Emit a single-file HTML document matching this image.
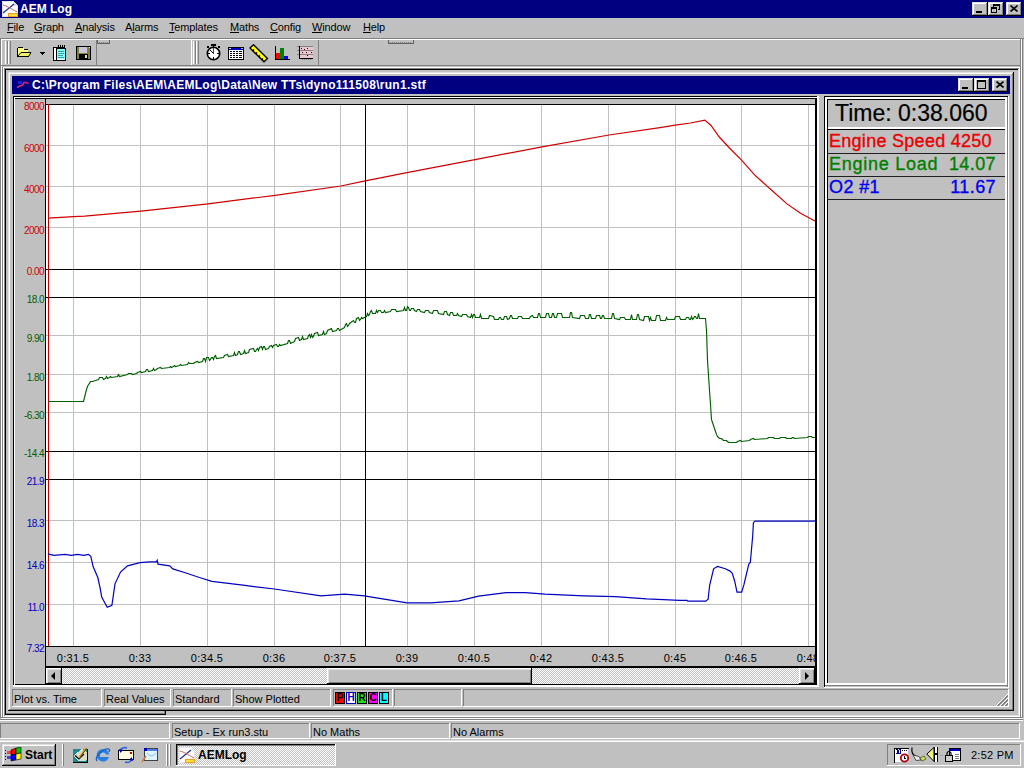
<!DOCTYPE html><html><head><meta charset="utf-8"><title>AEM Log</title><style>
html,body{margin:0;padding:0;width:1024px;height:768px;overflow:hidden;background:#c0c0c0;position:relative;font-family:"Liberation Sans",sans-serif;}
body>div{position:absolute}
.u{text-decoration:underline;text-underline-offset:1px}
.mn{font-size:11px;line-height:13px;color:#000;letter-spacing:-0.15px}
.st{font-size:11px;line-height:14px;color:#000;letter-spacing:0px}
</style></head><body>
<div style="left:0px;top:0px;width:1024px;height:18px;background:#000080"></div>
<svg style="position:absolute;left:2px;top:1px" width="16" height="16" viewBox="0 0 16 16" shape-rendering="crispEdges"><path d="M0.5 0.5H11.5L15.5 4.5V15.5H0.5Z" fill="#fff" stroke="#e8e0f8"/><path d="M11 0V5H16" fill="#d8e8d8"/><path d="M1 12L12 3" stroke="#303090" stroke-width="1.3" shape-rendering="auto" fill="none"/><path d="M1 4C5 5 8 7 15 11" stroke="#c06060" stroke-width="1" shape-rendering="auto" fill="none"/><rect x="6" y="12" width="10" height="4" fill="#f0a020"/><rect x="7" y="13" width="8" height="2" fill="#ffe040"/></svg>
<div style="left:20px;top:2px;white-space:pre;color:#fff;font-weight:bold;font-size:12px;line-height:14px">AEM Log</div>
<div style="left:972px;top:2px;width:16px;height:14px;background:#c0c0c0"></div>
<div style="left:972px;top:2px;width:16px;height:1px;background:#dfdfdf"></div>
<div style="left:972px;top:2px;width:1px;height:14px;background:#dfdfdf"></div>
<div style="left:972px;top:15px;width:16px;height:1px;background:#000"></div>
<div style="left:987px;top:2px;width:1px;height:14px;background:#000"></div>
<div style="left:973px;top:3px;width:14px;height:1px;background:#fff"></div>
<div style="left:973px;top:3px;width:1px;height:12px;background:#fff"></div>
<div style="left:973px;top:14px;width:14px;height:1px;background:#808080"></div>
<div style="left:986px;top:3px;width:1px;height:12px;background:#808080"></div>
<div style="left:976px;top:11px;width:6px;height:2px;background:#000"></div>
<div style="left:988px;top:2px;width:16px;height:14px;background:#c0c0c0"></div>
<div style="left:988px;top:2px;width:16px;height:1px;background:#dfdfdf"></div>
<div style="left:988px;top:2px;width:1px;height:14px;background:#dfdfdf"></div>
<div style="left:988px;top:15px;width:16px;height:1px;background:#000"></div>
<div style="left:1003px;top:2px;width:1px;height:14px;background:#000"></div>
<div style="left:989px;top:3px;width:14px;height:1px;background:#fff"></div>
<div style="left:989px;top:3px;width:1px;height:12px;background:#fff"></div>
<div style="left:989px;top:14px;width:14px;height:1px;background:#808080"></div>
<div style="left:1002px;top:3px;width:1px;height:12px;background:#808080"></div>
<svg style="position:absolute;left:991px;top:4px" width="9" height="9" viewBox="0 0 9 9" shape-rendering="crispEdges"><path d="M2.5 2.5V0.5H8.5V5.5H6.5" fill="none" stroke="#000"/><rect x="2" y="1" width="7" height="1" fill="#000"/><rect x="0.5" y="3.5" width="5" height="5" fill="none" stroke="#000"/><rect x="0" y="4" width="6" height="1" fill="#000"/></svg>
<div style="left:1006px;top:2px;width:16px;height:14px;background:#c0c0c0"></div>
<div style="left:1006px;top:2px;width:16px;height:1px;background:#dfdfdf"></div>
<div style="left:1006px;top:2px;width:1px;height:14px;background:#dfdfdf"></div>
<div style="left:1006px;top:15px;width:16px;height:1px;background:#000"></div>
<div style="left:1021px;top:2px;width:1px;height:14px;background:#000"></div>
<div style="left:1007px;top:3px;width:14px;height:1px;background:#fff"></div>
<div style="left:1007px;top:3px;width:1px;height:12px;background:#fff"></div>
<div style="left:1007px;top:14px;width:14px;height:1px;background:#808080"></div>
<div style="left:1020px;top:3px;width:1px;height:12px;background:#808080"></div>
<svg style="position:absolute;left:1010px;top:5px" width="8" height="7" viewBox="0 0 8 7" shape-rendering="crispEdges"><path d="M0.5 0.5L7.5 6.5M7.5 0.5L0.5 6.5" stroke="#000" stroke-width="1.6" shape-rendering="auto"/></svg>
<div class="mn" style="left:7px;top:21px;white-space:pre"><span class="u">F</span>ile</div>
<div class="mn" style="left:34px;top:21px;white-space:pre"><span class="u">G</span>raph</div>
<div class="mn" style="left:75px;top:21px;white-space:pre"><span class="u">A</span>nalysis</div>
<div class="mn" style="left:125px;top:21px;white-space:pre">A<span class="u">l</span>arms</div>
<div class="mn" style="left:169px;top:21px;white-space:pre"><span class="u">T</span>emplates</div>
<div class="mn" style="left:230px;top:21px;white-space:pre"><span class="u">M</span>aths</div>
<div class="mn" style="left:270px;top:21px;white-space:pre"><span class="u">C</span>onfig</div>
<div class="mn" style="left:312px;top:21px;white-space:pre"><span class="u">W</span>indow</div>
<div class="mn" style="left:363px;top:21px;white-space:pre"><span class="u">H</span>elp</div>
<div style="left:0px;top:38px;width:1024px;height:1px;background:#808080"></div>
<div style="left:0px;top:38px;width:1px;height:679px;background:#808080"></div>
<div style="left:1px;top:39px;width:1021px;height:1px;background:#fff"></div>
<div style="left:1px;top:39px;width:1px;height:678px;background:#fff"></div>
<div style="left:1px;top:65px;width:1021px;height:1px;background:#808080"></div>
<div style="left:96px;top:40px;width:1px;height:26px;background:#808080"></div>
<div style="left:5px;top:41px;width:1px;height:23px;background:#fff"></div>
<div style="left:7px;top:41px;width:1px;height:23px;background:#808080"></div>
<div style="left:8px;top:41px;width:1px;height:23px;background:#fff"></div>
<div style="left:10px;top:41px;width:1px;height:23px;background:#808080"></div>
<div style="left:97px;top:43px;width:13px;height:1px;background:#606060"></div>
<div style="left:97px;top:40px;width:1px;height:4px;background:#606060"></div>
<div style="left:109px;top:40px;width:1px;height:4px;background:#606060"></div>
<div style="left:99px;top:42px;width:1px;height:1px;background:#808080"></div>
<div style="left:101px;top:42px;width:1px;height:1px;background:#808080"></div>
<div style="left:103px;top:42px;width:1px;height:1px;background:#808080"></div>
<div style="left:105px;top:42px;width:1px;height:1px;background:#808080"></div>
<div style="left:107px;top:42px;width:1px;height:1px;background:#808080"></div>
<div style="left:388px;top:43px;width:26px;height:1px;background:#606060"></div>
<div style="left:388px;top:40px;width:1px;height:4px;background:#606060"></div>
<div style="left:413px;top:40px;width:1px;height:4px;background:#606060"></div>
<div style="left:390px;top:42px;width:1px;height:1px;background:#808080"></div>
<div style="left:392px;top:42px;width:1px;height:1px;background:#808080"></div>
<div style="left:394px;top:42px;width:1px;height:1px;background:#808080"></div>
<div style="left:396px;top:42px;width:1px;height:1px;background:#808080"></div>
<div style="left:398px;top:42px;width:1px;height:1px;background:#808080"></div>
<div style="left:400px;top:42px;width:1px;height:1px;background:#808080"></div>
<div style="left:402px;top:42px;width:1px;height:1px;background:#808080"></div>
<div style="left:404px;top:42px;width:1px;height:1px;background:#808080"></div>
<div style="left:406px;top:42px;width:1px;height:1px;background:#808080"></div>
<div style="left:408px;top:42px;width:1px;height:1px;background:#808080"></div>
<div style="left:410px;top:42px;width:1px;height:1px;background:#808080"></div>
<div style="left:191px;top:40px;width:1px;height:25px;background:#fff"></div>
<div style="left:318px;top:40px;width:1px;height:26px;background:#808080"></div>
<div style="left:193px;top:41px;width:1px;height:23px;background:#fff"></div>
<div style="left:195px;top:41px;width:1px;height:23px;background:#808080"></div>
<div style="left:196px;top:41px;width:1px;height:23px;background:#fff"></div>
<div style="left:198px;top:41px;width:1px;height:23px;background:#808080"></div>
<svg style="position:absolute;left:16px;top:46px" width="16" height="12" viewBox="0 0 16 12" shape-rendering="crispEdges"><path d="M1.5 10.5V2.5L2.5 1.5H6.5L7.5 2.5V3.5H11.5V6.5" fill="#ffff80" stroke="#000"/><path d="M1.5 10.5V2.5L2.5 1.5H6.5L7.5 2.5V3.5H11.5V6.5H5L1.5 10.5Z" fill="#ffff80"/><path d="M1.5 10.5L5 6.5H15L12.5 10.5Z" fill="#f0f070" stroke="#000" stroke-linejoin="miter" shape-rendering="auto"/><path d="M1.5 2.5V10.5H12.5" fill="none" stroke="#000"/></svg>
<svg style="position:absolute;left:40px;top:52px" width="5" height="3" viewBox="0 0 5 3" shape-rendering="crispEdges"><path d="M0 0H5V1H4V2H3V3H2V2H1V1H0Z" fill="#000"/></svg>
<svg style="position:absolute;left:53px;top:45px" width="14" height="16" viewBox="0 0 14 16" shape-rendering="crispEdges"><rect x="0.5" y="2.5" width="11" height="13" fill="#fff" stroke="#000"/><rect x="3.5" y="3.5" width="9" height="12" fill="#80ffff" stroke="#000"/><rect x="4" y="14" width="8" height="1" fill="#fff"/><path d="M5 0V4M7 0V4M9 0V4M11 0V4" stroke="#000"/><path d="M5 6H11M5 8H11M5 10H10M5 12H11" stroke="#40a0a0"/></svg>
<svg style="position:absolute;left:76px;top:46px" width="15" height="14" viewBox="0 0 15 14" shape-rendering="crispEdges"><rect x="0.5" y="0.5" width="14" height="13" fill="#808040" stroke="#000"/><rect x="3" y="1" width="8" height="6" fill="#c8c8d8"/><rect x="3" y="8" width="9" height="6" fill="#000"/><rect x="9" y="9" width="2" height="3" fill="#e0e0c0"/><rect x="13" y="1" width="1" height="1" fill="#fff"/></svg>
<svg style="position:absolute;left:205px;top:44px" width="17" height="17" viewBox="0 0 17 17" shape-rendering="crispEdges"><circle cx="8.5" cy="9.5" r="6.2" fill="#fff" stroke="#000" stroke-width="1.6" shape-rendering="auto"/><rect x="6" y="0" width="5" height="2" fill="#000"/><rect x="8" y="1" width="1" height="2" fill="#000"/><rect x="2" y="2" width="2" height="2" fill="#000"/><rect x="13" y="2" width="2" height="2" fill="#000"/><rect x="8" y="4" width="1" height="6" fill="#c00040"/><path d="M5 6L8 9" stroke="#000" shape-rendering="auto"/><rect x="8" y="13" width="1" height="2" fill="#000"/><rect x="3" y="9" width="2" height="1" fill="#000"/><rect x="12" y="9" width="2" height="1" fill="#000"/></svg>
<svg style="position:absolute;left:228px;top:47px" width="16" height="13" viewBox="0 0 16 13" shape-rendering="crispEdges"><rect x="0.5" y="0.5" width="15" height="12" fill="#fff" stroke="#000"/><rect x="1" y="1" width="14" height="2" fill="#0000c0"/><rect x="1" y="1" width="2" height="1" fill="#c0c0ff"/><rect x="13" y="1" width="2" height="1" fill="#c0c0ff"/><path d="M2 5h2M5 5h2M8 5h2M11 5h3M2 7h2M5 7h2M8 7h2M11 7h3M2 9h2M5 9h2M8 9h2M11 9h3M2 11h2M5 11h2M8 11h2M11 11h3" stroke="#000" transform="translate(0,-0.5)"/></svg>
<svg style="position:absolute;left:249px;top:44px" width="20" height="19" viewBox="0 0 20 19" shape-rendering="crispEdges"><path d="M1 4L4.5 0.8L18.5 14.5L15 17.8Z" fill="#ffff00" stroke="#000" stroke-width="1.4" shape-rendering="auto"/><path d="M3.5 7L5 5.5M6.5 10L8 8.5M9.5 13L11 11.5M12.5 16L14 14.5" stroke="#000" stroke-width="1.4" shape-rendering="auto"/></svg>
<svg style="position:absolute;left:275px;top:46px" width="16" height="15" viewBox="0 0 16 15" shape-rendering="crispEdges"><rect x="1" y="7" width="4" height="6" fill="#ff0000"/><rect x="5" y="2" width="4" height="11" fill="#008000"/><rect x="9" y="10" width="4" height="3" fill="#0000ff"/><rect x="0" y="0" width="1" height="14" fill="#000"/><rect x="0" y="13" width="15" height="1" fill="#000"/></svg>
<svg style="position:absolute;left:296px;top:45px" width="18" height="17" viewBox="0 0 18 17" shape-rendering="crispEdges"><rect x="4" y="2" width="13" height="11" fill="#e8c8d0"/><rect x="1" y="1" width="16" height="1" fill="#808080"/><rect x="1" y="5" width="16" height="1" fill="#808080"/><rect x="1" y="9" width="16" height="1" fill="#808080"/><rect x="3" y="1" width="1" height="13" fill="#000"/><rect x="3" y="13" width="14" height="1" fill="#000"/><rect x="5" y="3" width="1" height="1" fill="#400"/><rect x="8" y="4" width="1" height="1" fill="#400"/><rect x="11" y="3" width="1" height="1" fill="#400"/><rect x="6" y="7" width="1" height="1" fill="#400"/><rect x="10" y="7" width="1" height="1" fill="#400"/><rect x="15" y="7" width="1" height="1" fill="#400"/><rect x="11" y="10" width="1" height="1" fill="#400"/><path d="M6 14v1M8 14v1M10 14v1M12 14v1M14 14v1" stroke="#808080" transform="translate(0.5,0)"/></svg>
<div style="left:1px;top:67px;width:1021px;height:1px;background:#fff"></div>
<div style="left:2px;top:67px;width:1px;height:650px;background:#808080"></div>
<div style="left:3px;top:67px;width:1px;height:650px;background:#fff"></div>
<div style="left:4px;top:68px;width:1016px;height:1px;background:#808080"></div>
<div style="left:4px;top:68px;width:1px;height:649px;background:#808080"></div>
<div style="left:5px;top:69px;width:1014px;height:1px;background:#000"></div>
<div style="left:5px;top:69px;width:1px;height:647px;background:#000"></div>
<div style="left:1019px;top:68px;width:1px;height:649px;background:#fff"></div>
<div style="left:1018px;top:69px;width:1px;height:647px;background:#dfdfdf"></div>
<div style="left:1020px;top:39px;width:1px;height:681px;background:#808080"></div>
<div style="left:1021px;top:39px;width:1px;height:681px;background:#fff"></div>
<div style="left:1022px;top:39px;width:1px;height:681px;background:#808080"></div>
<div style="left:4px;top:716px;width:1016px;height:1px;background:#fff"></div>
<div style="left:5px;top:715px;width:1014px;height:1px;background:#dfdfdf"></div>
<div style="left:0px;top:717px;width:1023px;height:1px;background:#808080"></div>
<div style="left:1px;top:718px;width:1022px;height:1px;background:#fff"></div>
<div style="left:0px;top:719px;width:1023px;height:1px;background:#808080"></div>
<div style="left:0px;top:720px;width:1023px;height:1px;background:#fff"></div>
<div style="left:6px;top:714px;width:160px;height:1px;background:#000"></div>
<div style="left:165px;top:710px;width:1px;height:5px;background:#000"></div>
<div style="left:6px;top:713px;width:159px;height:1px;background:#808080"></div>
<div style="left:164px;top:711px;width:1px;height:3px;background:#808080"></div>
<div style="left:8px;top:72px;width:1006px;height:639px;background:#c0c0c0"></div>
<div style="left:8px;top:72px;width:1006px;height:1px;background:#dfdfdf"></div>
<div style="left:8px;top:72px;width:1px;height:639px;background:#dfdfdf"></div>
<div style="left:9px;top:73px;width:1004px;height:1px;background:#fff"></div>
<div style="left:9px;top:73px;width:1px;height:637px;background:#fff"></div>
<div style="left:8px;top:710px;width:1006px;height:1px;background:#000"></div>
<div style="left:1013px;top:72px;width:1px;height:639px;background:#000"></div>
<div style="left:9px;top:709px;width:1004px;height:1px;background:#808080"></div>
<div style="left:1012px;top:73px;width:1px;height:637px;background:#808080"></div>
<div style="left:12px;top:76px;width:998px;height:18px;background:#000080"></div>
<svg style="position:absolute;left:14px;top:77px" width="16" height="16" viewBox="0 0 16 16" shape-rendering="crispEdges"><rect x="4" y="4" width="4" height="3" fill="#2020e0"/><path d="M3 10.5L6 9L8.6 8L10 5.6L12 5.6L14.6 6.5" stroke="#d03070" stroke-width="1.5" fill="none" shape-rendering="auto"/></svg>
<div style="left:32px;top:78px;white-space:pre;color:#fff;font-weight:bold;font-size:12px;line-height:14px;letter-spacing:0.28px">C:\Program Files\AEM\AEMLog\Data\New TTs\dyno111508\run1.stf</div>
<div style="left:958px;top:78px;width:16px;height:14px;background:#c0c0c0"></div>
<div style="left:958px;top:78px;width:16px;height:1px;background:#dfdfdf"></div>
<div style="left:958px;top:78px;width:1px;height:14px;background:#dfdfdf"></div>
<div style="left:958px;top:91px;width:16px;height:1px;background:#000"></div>
<div style="left:973px;top:78px;width:1px;height:14px;background:#000"></div>
<div style="left:959px;top:79px;width:14px;height:1px;background:#fff"></div>
<div style="left:959px;top:79px;width:1px;height:12px;background:#fff"></div>
<div style="left:959px;top:90px;width:14px;height:1px;background:#808080"></div>
<div style="left:972px;top:79px;width:1px;height:12px;background:#808080"></div>
<div style="left:962px;top:87px;width:6px;height:2px;background:#000"></div>
<div style="left:974px;top:78px;width:16px;height:14px;background:#c0c0c0"></div>
<div style="left:974px;top:78px;width:16px;height:1px;background:#dfdfdf"></div>
<div style="left:974px;top:78px;width:1px;height:14px;background:#dfdfdf"></div>
<div style="left:974px;top:91px;width:16px;height:1px;background:#000"></div>
<div style="left:989px;top:78px;width:1px;height:14px;background:#000"></div>
<div style="left:975px;top:79px;width:14px;height:1px;background:#fff"></div>
<div style="left:975px;top:79px;width:1px;height:12px;background:#fff"></div>
<div style="left:975px;top:90px;width:14px;height:1px;background:#808080"></div>
<div style="left:988px;top:79px;width:1px;height:12px;background:#808080"></div>
<svg style="position:absolute;left:977px;top:80px" width="9" height="9" viewBox="0 0 9 9" shape-rendering="crispEdges"><rect x="0.5" y="0.5" width="8" height="8" fill="none" stroke="#000"/><rect x="0" y="1" width="9" height="1" fill="#000"/></svg>
<div style="left:992px;top:78px;width:16px;height:14px;background:#c0c0c0"></div>
<div style="left:992px;top:78px;width:16px;height:1px;background:#dfdfdf"></div>
<div style="left:992px;top:78px;width:1px;height:14px;background:#dfdfdf"></div>
<div style="left:992px;top:91px;width:16px;height:1px;background:#000"></div>
<div style="left:1007px;top:78px;width:1px;height:14px;background:#000"></div>
<div style="left:993px;top:79px;width:14px;height:1px;background:#fff"></div>
<div style="left:993px;top:79px;width:1px;height:12px;background:#fff"></div>
<div style="left:993px;top:90px;width:14px;height:1px;background:#808080"></div>
<div style="left:1006px;top:79px;width:1px;height:12px;background:#808080"></div>
<svg style="position:absolute;left:996px;top:81px" width="8" height="7" viewBox="0 0 8 7" shape-rendering="crispEdges"><path d="M0.5 0.5L7.5 6.5M7.5 0.5L0.5 6.5" stroke="#000" stroke-width="1.6" shape-rendering="auto"/></svg>
<div style="left:13px;top:96px;width:806px;height:591px;background:#c0c0c0"></div>
<div style="left:13px;top:96px;width:805px;height:1px;background:#000"></div>
<div style="left:13px;top:96px;width:1px;height:590px;background:#000"></div>
<div style="left:14px;top:97px;width:803px;height:1px;background:#fff"></div>
<div style="left:14px;top:97px;width:1px;height:588px;background:#fff"></div>
<div style="left:15px;top:98px;width:802px;height:1px;background:#000"></div>
<div style="left:815px;top:98px;width:1px;height:587px;background:#000"></div>
<div style="left:816px;top:98px;width:1px;height:587px;background:#000"></div>
<div style="left:15px;top:684px;width:802px;height:1px;background:#000"></div>
<div style="left:817px;top:96px;width:1px;height:591px;background:#fff"></div>
<div style="left:818px;top:96px;width:1px;height:591px;background:#fff"></div>
<div style="left:13px;top:685px;width:806px;height:1px;background:#fff"></div>
<div style="left:13px;top:686px;width:806px;height:1px;background:#fff"></div>
<div style="left:824px;top:96px;width:185px;height:592px;background:#c0c0c0"></div>
<div style="left:824px;top:96px;width:185px;height:1px;background:#000"></div>
<div style="left:824px;top:96px;width:1px;height:592px;background:#000"></div>
<div style="left:825px;top:97px;width:183px;height:1px;background:#fff"></div>
<div style="left:825px;top:97px;width:1px;height:590px;background:#fff"></div>
<div style="left:826px;top:98px;width:181px;height:1px;background:#fff"></div>
<div style="left:826px;top:98px;width:1px;height:588px;background:#fff"></div>
<div style="left:1007px;top:97px;width:1px;height:590px;background:#808080"></div>
<div style="left:825px;top:685px;width:183px;height:1px;background:#808080"></div>
<div style="left:1008px;top:96px;width:1px;height:592px;background:#fff"></div>
<div style="left:824px;top:687px;width:185px;height:1px;background:#fff"></div>
<div style="left:827px;top:99px;width:178px;height:1px;background:#000"></div>
<div style="left:827px;top:99px;width:1px;height:585px;background:#000"></div>
<div style="left:1005px;top:98px;width:1px;height:586px;background:#fff"></div>
<div style="left:1006px;top:98px;width:1px;height:586px;background:#fff"></div>
<div style="left:827px;top:684px;width:180px;height:1px;background:#fff"></div>
<div style="left:827px;top:683px;width:180px;height:1px;background:#fff"></div>
<div style="left:835px;top:100px;white-space:pre;font-size:23px;line-height:26px;color:#000;-webkit-text-stroke:0.2px #000">Time: 0:38.060</div>
<div style="left:828px;top:127px;width:177px;height:1px;background:#fff"></div>
<div style="left:828px;top:128px;width:177px;height:1px;background:#fff"></div>
<div style="left:828px;top:129px;width:177px;height:1px;background:#000"></div>
<div style="left:828px;top:153px;width:177px;height:1px;background:#202020"></div>
<div style="left:828px;top:176px;width:177px;height:1px;background:#202020"></div>
<div style="left:828px;top:199px;width:177px;height:1px;background:#202020"></div>
<div style="left:829px;top:131px;white-space:pre;font-size:18px;line-height:20px;letter-spacing:0.4px;color:#e80000;-webkit-text-stroke:0.35px #e80000;letter-spacing:0.28px">Engine Speed 4250</div>
<div style="left:829px;top:154px;white-space:pre;font-size:18px;line-height:20px;letter-spacing:0.4px;color:#008000;-webkit-text-stroke:0.35px #008000;letter-spacing:0.75px">Engine Load</div>
<div style="left:896px;top:154px;width:100px;text-align:right;font-size:18px;line-height:20px;letter-spacing:0.4px;color:#008000;-webkit-text-stroke:0.35px #008000">14.07</div>
<div style="left:829px;top:177px;white-space:pre;font-size:18px;line-height:20px;letter-spacing:0.4px;color:#0000f0;-webkit-text-stroke:0.35px #0000f0">O2 #1</div>
<div style="left:896px;top:177px;width:100px;text-align:right;font-size:18px;line-height:20px;letter-spacing:0.4px;color:#0000f0;-webkit-text-stroke:0.35px #0000f0">11.67</div>
<div style="left:46px;top:104px;width:769px;height:543px;background:#fff"></div>
<div style="left:45px;top:98px;width:1px;height:569px;background:#000"></div>
<svg style="position:absolute;left:0;top:0" width="1024" height="768" shape-rendering="crispEdges"><rect x="73" y="104" width="1" height="542" fill="#c0c0c0"/><rect x="140" y="104" width="1" height="542" fill="#c0c0c0"/><rect x="207" y="104" width="1" height="542" fill="#c0c0c0"/><rect x="274" y="104" width="1" height="542" fill="#c0c0c0"/><rect x="340" y="104" width="1" height="542" fill="#c0c0c0"/><rect x="407" y="104" width="1" height="542" fill="#c0c0c0"/><rect x="474" y="104" width="1" height="542" fill="#c0c0c0"/><rect x="541" y="104" width="1" height="542" fill="#c0c0c0"/><rect x="608" y="104" width="1" height="542" fill="#c0c0c0"/><rect x="675" y="104" width="1" height="542" fill="#c0c0c0"/><rect x="741" y="104" width="1" height="542" fill="#c0c0c0"/><rect x="808" y="104" width="1" height="542" fill="#c0c0c0"/><rect x="46" y="145" width="769" height="1" fill="#c0c0c0"/><rect x="46" y="186" width="769" height="1" fill="#c0c0c0"/><rect x="46" y="227" width="769" height="1" fill="#c0c0c0"/><rect x="46" y="335" width="769" height="1" fill="#c0c0c0"/><rect x="46" y="374" width="769" height="1" fill="#c0c0c0"/><rect x="46" y="412" width="769" height="1" fill="#c0c0c0"/><rect x="46" y="520" width="769" height="1" fill="#c0c0c0"/><rect x="46" y="562" width="769" height="1" fill="#c0c0c0"/><rect x="46" y="604" width="769" height="1" fill="#c0c0c0"/><rect x="45" y="104" width="770" height="1" fill="#000"/><rect x="45" y="269" width="770" height="1" fill="#000"/><rect x="45" y="297" width="770" height="1" fill="#000"/><rect x="45" y="451" width="770" height="1" fill="#000"/><rect x="45" y="479" width="770" height="1" fill="#000"/><rect x="45" y="646" width="770" height="1" fill="#000"/><rect x="365" y="104" width="1" height="542" fill="#000"/><rect x="48" y="104" width="1" height="542" fill="#c00000"/></svg>
<svg style="position:absolute;left:0;top:0" width="1024" height="768"><path d="M48.0 218.2 L73.7 216.6 L84.6 216.2 L140.9 211.2 L208.0 203.8 L275.2 195.3 L340.9 186.0 L364.0 181.2 L407.0 172.6 L475.0 159.7 L542.0 146.8 L609.0 135.0 L660.0 127.7 L675.2 125.2 L690.5 123.0 L704.9 120.1 L710.8 125.2 L719.3 137.0 L729.4 148.0 L741.3 159.9 L754.8 175.1 L770.0 188.7 L787.0 203.9 L800.5 213.2 L815.0 221.0" fill="none" stroke="#d00000" stroke-width="1.2"/><path d="M48.5 401.5 L49.5 401.5 L50.5 401.5 L51.5 401.5 L52.5 401.5 L53.5 401.5 L54.5 401.5 L55.5 401.5 L56.5 401.5 L57.5 401.5 L58.5 401.5 L59.5 401.5 L60.5 401.5 L61.5 401.5 L62.5 401.5 L63.5 401.5 L64.5 401.5 L65.5 401.5 L66.5 401.5 L67.5 401.5 L68.5 401.5 L69.5 401.5 L70.5 401.5 L71.5 401.5 L72.5 401.5 L73.5 401.5 L74.5 401.5 L75.5 401.5 L76.5 401.5 L77.5 401.5 L78.5 401.5 L79.5 401.5 L80.5 401.5 L81.5 401.5 L82.5 401.5 L83.5 401.5 L84.5 397.5 L85.5 393.5 L86.5 389.5 L87.5 386.5 L88.5 384.5 L89.5 383.5 L90.5 381.5 L91.5 381.5 L92.5 381.5 L98.5 379.5 L99.5 377.5 L102.5 377.5 L103.5 379.5 L105.5 378.5 L106.5 376.5 L107.5 378.5 L109.5 377.5 L110.5 376.5 L111.5 377.5 L117.5 376.5 L118.5 374.5 L119.5 376.5 L127.5 374.5 L128.5 373.5 L131.5 373.5 L132.5 374.5 L136.5 373.5 L137.5 372.5 L140.5 371.5 L141.5 372.5 L145.5 371.5 L146.5 369.5 L147.5 369.5 L148.5 371.5 L152.5 370.5 L153.5 368.5 L154.5 370.5 L156.5 369.5 L157.5 368.5 L160.5 367.5 L161.5 368.5 L169.5 367.5 L170.5 366.5 L171.5 367.5 L173.5 366.5 L174.5 365.5 L175.5 366.5 L179.5 365.5 L180.5 364.5 L181.5 365.5 L187.5 364.5 L188.5 362.5 L189.5 363.5 L193.5 363.5 L194.5 362.5 L197.5 361.5 L198.5 362.5 L202.5 361.5 L203.5 358.5 L204.5 358.5 L205.5 361.5 L206.5 357.5 L208.5 357.5 L209.5 360.5 L210.5 359.5 L211.5 357.5 L212.5 357.5 L213.5 359.5 L214.5 356.5 L215.5 355.5 L216.5 358.5 L223.5 357.5 L224.5 355.5 L227.5 354.5 L228.5 356.5 L233.5 355.5 L234.5 352.5 L235.5 355.5 L237.5 354.5 L238.5 351.5 L239.5 351.5 L240.5 354.5 L243.5 353.5 L244.5 350.5 L245.5 353.5 L248.5 352.5 L249.5 349.5 L253.5 348.5 L254.5 351.5 L255.5 351.5 L256.5 349.5 L257.5 348.5 L258.5 350.5 L259.5 347.5 L261.5 346.5 L262.5 349.5 L263.5 346.5 L264.5 346.5 L265.5 349.5 L268.5 348.5 L269.5 346.5 L271.5 345.5 L272.5 347.5 L273.5 345.5 L276.5 344.5 L277.5 346.5 L278.5 346.5 L279.5 344.5 L280.5 345.5 L287.5 343.5 L288.5 340.5 L289.5 340.5 L290.5 343.5 L294.5 341.5 L295.5 338.5 L298.5 337.5 L299.5 340.5 L301.5 339.5 L302.5 336.5 L303.5 339.5 L307.5 338.5 L308.5 335.5 L309.5 334.5 L310.5 337.5 L311.5 334.5 L312.5 337.5 L313.5 336.5 L314.5 333.5 L317.5 332.5 L318.5 335.5 L322.5 334.5 L323.5 331.5 L324.5 334.5 L326.5 333.5 L327.5 330.5 L331.5 328.5 L332.5 331.5 L336.5 330.5 L337.5 328.5 L338.5 328.5 L339.5 330.5 L344.5 327.5 L345.5 324.5 L346.5 323.5 L347.5 326.5 L348.5 325.5 L349.5 323.5 L353.5 320.5 L354.5 322.5 L355.5 322.5 L356.5 318.5 L358.5 317.5 L359.5 320.5 L360.5 319.5 L361.5 317.5 L362.5 318.5 L366.5 316.5 L367.5 313.5 L368.5 315.5 L369.5 314.5 L370.5 311.5 L371.5 310.5 L372.5 313.5 L375.5 313.5 L376.5 310.5 L377.5 312.5 L378.5 310.5 L380.5 310.5 L381.5 312.5 L383.5 312.5 L384.5 310.5 L385.5 312.5 L390.5 311.5 L391.5 309.5 L395.5 309.5 L396.5 311.5 L403.5 310.5 L404.5 307.5 L405.5 310.5 L406.5 310.5 L407.5 306.5 L408.5 307.5 L409.5 310.5 L410.5 310.5 L411.5 308.5 L413.5 308.5 L414.5 310.5 L416.5 311.5 L417.5 309.5 L419.5 309.5 L420.5 311.5 L424.5 312.5 L425.5 310.5 L428.5 310.5 L429.5 312.5 L432.5 313.5 L433.5 310.5 L437.5 310.5 L438.5 313.5 L443.5 314.5 L444.5 311.5 L446.5 311.5 L447.5 314.5 L449.5 315.5 L450.5 312.5 L452.5 312.5 L453.5 315.5 L456.5 315.5 L457.5 313.5 L458.5 315.5 L461.5 316.5 L462.5 314.5 L466.5 314.5 L467.5 316.5 L470.5 317.5 L471.5 314.5 L472.5 317.5 L473.5 314.5 L474.5 314.5 L475.5 317.5 L479.5 317.5 L480.5 314.5 L481.5 318.5 L488.5 318.5 L489.5 315.5 L493.5 316.5 L494.5 319.5 L498.5 319.5 L499.5 317.5 L500.5 317.5 L501.5 319.5 L503.5 319.5 L504.5 316.5 L506.5 316.5 L507.5 319.5 L509.5 318.5 L510.5 315.5 L511.5 315.5 L512.5 318.5 L517.5 318.5 L518.5 316.5 L521.5 316.5 L522.5 318.5 L529.5 318.5 L530.5 316.5 L532.5 315.5 L533.5 317.5 L537.5 317.5 L538.5 313.5 L539.5 313.5 L540.5 317.5 L545.5 317.5 L546.5 313.5 L548.5 313.5 L549.5 317.5 L551.5 317.5 L552.5 313.5 L553.5 313.5 L554.5 317.5 L556.5 317.5 L557.5 313.5 L561.5 313.5 L562.5 317.5 L569.5 317.5 L570.5 312.5 L571.5 312.5 L572.5 317.5 L579.5 318.5 L580.5 315.5 L584.5 315.5 L585.5 318.5 L588.5 318.5 L589.5 314.5 L590.5 314.5 L591.5 318.5 L595.5 318.5 L596.5 315.5 L599.5 315.5 L600.5 318.5 L601.5 318.5 L602.5 315.5 L603.5 315.5 L604.5 318.5 L611.5 318.5 L612.5 313.5 L613.5 313.5 L614.5 318.5 L619.5 319.5 L620.5 317.5 L624.5 317.5 L625.5 319.5 L630.5 319.5 L631.5 314.5 L632.5 319.5 L636.5 319.5 L637.5 314.5 L638.5 314.5 L639.5 319.5 L643.5 320.5 L644.5 316.5 L648.5 316.5 L649.5 320.5 L650.5 317.5 L651.5 320.5 L655.5 320.5 L656.5 315.5 L659.5 315.5 L660.5 320.5 L665.5 320.5 L666.5 317.5 L667.5 319.5 L674.5 319.5 L675.5 316.5 L679.5 316.5 L680.5 319.5 L685.5 319.5 L686.5 317.5 L688.5 317.5 L689.5 319.5 L690.5 319.5 L691.5 316.5 L692.5 319.5 L693.5 318.5 L694.5 316.5 L695.5 316.5 L696.5 318.5 L697.5 318.5 L698.5 313.5 L699.5 318.5 L703.5 318.5 L704.5 318.5 L705.5 318.5 L706.5 330.5 L707.5 360.5 L708.5 375.5 L709.5 390.5 L710.5 404.5 L711.5 419.5 L712.5 422.5 L713.5 425.5 L714.5 428.5 L715.5 431.5 L716.5 434.5 L717.5 436.5 L718.5 437.5 L719.5 438.5 L720.5 438.5 L721.5 438.5 L722.5 439.5 L723.5 440.5 L724.5 440.5 L725.5 440.5 L726.5 440.5 L727.5 441.5 L728.5 442.5 L736.5 442.5 L737.5 441.5 L740.5 440.5 L741.5 441.5 L749.5 440.5 L750.5 439.5 L753.5 438.5 L754.5 439.5 L767.5 438.5 L768.5 437.5 L773.5 437.5 L774.5 438.5 L779.5 438.5 L780.5 437.5 L785.5 437.5 L786.5 438.5 L791.5 438.5 L792.5 437.5 L793.5 437.5 L794.5 438.5 L807.5 437.5 L808.5 436.5 L811.5 436.5 L812.5 437.5 L814.5 437.5 L815.0 437.5" fill="none" stroke="#006000" stroke-width="1.15"/><path d="M47.8 553.8 L54.0 555.3 L65.0 554.4 L71.2 555.3 L77.5 554.4 L83.8 555.3 L88.4 554.4 L90.8 556.4 L93.1 566.6 L97.8 577.5 L100.2 588.4 L101.7 597.0 L107.2 607.2 L111.9 605.3 L115.0 583.8 L120.5 572.0 L127.5 565.8 L140.0 562.7 L149.4 561.9 L156.4 561.9 L157.2 560.3 L158.0 564.2 L169.7 565.8 L172.8 568.9 L185.3 572.8 L199.4 577.5 L211.9 581.3 L243.0 585.2 L274.4 589.0 L321.0 595.8 L344.7 594.2 L364.2 595.8 L407.2 602.8 L430.6 602.8 L459.0 600.9 L478.6 596.2 L506.0 592.7 L525.5 592.7 L545.0 594.2 L584.0 595.8 L615.3 596.6 L646.6 598.9 L680.0 600.3 L687.0 600.3 L687.8 601.2 L705.8 601.2 L708.1 599.2 L709.7 585.2 L713.6 568.8 L717.5 566.4 L725.3 568.8 L730.0 571.1 L732.3 573.4 L734.7 581.2 L737.0 592.2 L741.7 592.2 L744.0 584.4 L748.8 564.0 L750.3 562.5 L752.7 536.0 L753.4 522.7 L755.0 521.1 L815.0 521.1" fill="none" stroke="#0000c0" stroke-width="1.2"/></svg>
<div style="left:10px;top:100.6px;width:34px;text-align:right;font-size:10px;line-height:12px;letter-spacing:-0.55px;color:#d00000">8000</div>
<div style="left:10px;top:142.6px;width:34px;text-align:right;font-size:10px;line-height:12px;letter-spacing:-0.55px;color:#d00000">6000</div>
<div style="left:10px;top:183.6px;width:34px;text-align:right;font-size:10px;line-height:12px;letter-spacing:-0.55px;color:#d00000">4000</div>
<div style="left:10px;top:224.6px;width:34px;text-align:right;font-size:10px;line-height:12px;letter-spacing:-0.55px;color:#d00000">2000</div>
<div style="left:10px;top:265.6px;width:34px;text-align:right;font-size:10px;line-height:12px;letter-spacing:-0.55px;color:#d00000">0.00</div>
<div style="left:10px;top:293.6px;width:34px;text-align:right;font-size:10px;line-height:12px;letter-spacing:-0.55px;color:#006000">18.0</div>
<div style="left:10px;top:332.6px;width:34px;text-align:right;font-size:10px;line-height:12px;letter-spacing:-0.55px;color:#006000">9.90</div>
<div style="left:10px;top:371.6px;width:34px;text-align:right;font-size:10px;line-height:12px;letter-spacing:-0.55px;color:#006000">1.80</div>
<div style="left:10px;top:409.6px;width:34px;text-align:right;font-size:10px;line-height:12px;letter-spacing:-0.55px;color:#006000">-6.30</div>
<div style="left:10px;top:447.6px;width:34px;text-align:right;font-size:10px;line-height:12px;letter-spacing:-0.55px;color:#006000">-14.4</div>
<div style="left:10px;top:475.6px;width:34px;text-align:right;font-size:10px;line-height:12px;letter-spacing:-0.55px;color:#0000c0">21.9</div>
<div style="left:10px;top:517.6px;width:34px;text-align:right;font-size:10px;line-height:12px;letter-spacing:-0.55px;color:#0000c0">18.3</div>
<div style="left:10px;top:559.6px;width:34px;text-align:right;font-size:10px;line-height:12px;letter-spacing:-0.55px;color:#0000c0">14.6</div>
<div style="left:10px;top:601.6px;width:34px;text-align:right;font-size:10px;line-height:12px;letter-spacing:-0.55px;color:#0000c0">11.0</div>
<div style="left:10px;top:642.6px;width:34px;text-align:right;font-size:10px;line-height:12px;letter-spacing:-0.55px;color:#0000c0">7.32</div>
<div style="left:46px;top:647px;width:769px;height:19px;overflow:hidden"><div style="position:absolute;left:-3px;top:5px;width:60px;text-align:center;font-size:11px;line-height:13px;color:#000;letter-spacing:0.3px">0:31.5</div><div style="position:absolute;left:64px;top:5px;width:60px;text-align:center;font-size:11px;line-height:13px;color:#000;letter-spacing:0.3px">0:33</div><div style="position:absolute;left:131px;top:5px;width:60px;text-align:center;font-size:11px;line-height:13px;color:#000;letter-spacing:0.3px">0:34.5</div><div style="position:absolute;left:198px;top:5px;width:60px;text-align:center;font-size:11px;line-height:13px;color:#000;letter-spacing:0.3px">0:36</div><div style="position:absolute;left:264px;top:5px;width:60px;text-align:center;font-size:11px;line-height:13px;color:#000;letter-spacing:0.3px">0:37.5</div><div style="position:absolute;left:331px;top:5px;width:60px;text-align:center;font-size:11px;line-height:13px;color:#000;letter-spacing:0.3px">0:39</div><div style="position:absolute;left:398px;top:5px;width:60px;text-align:center;font-size:11px;line-height:13px;color:#000;letter-spacing:0.3px">0:40.5</div><div style="position:absolute;left:465px;top:5px;width:60px;text-align:center;font-size:11px;line-height:13px;color:#000;letter-spacing:0.3px">0:42</div><div style="position:absolute;left:532px;top:5px;width:60px;text-align:center;font-size:11px;line-height:13px;color:#000;letter-spacing:0.3px">0:43.5</div><div style="position:absolute;left:599px;top:5px;width:60px;text-align:center;font-size:11px;line-height:13px;color:#000;letter-spacing:0.3px">0:45</div><div style="position:absolute;left:665px;top:5px;width:60px;text-align:center;font-size:11px;line-height:13px;color:#000;letter-spacing:0.3px">0:46.5</div><div style="position:absolute;left:732px;top:5px;width:60px;text-align:center;font-size:11px;line-height:13px;color:#000;letter-spacing:0.3px">0:48</div></div>
<div style="left:45px;top:666px;width:772px;height:1px;background:#000"></div>
<div style="left:45px;top:667px;width:772px;height:1px;background:#000"></div>
<div style="left:45px;top:666px;width:1px;height:19px;background:#000"></div>
<div style="left:46px;top:668px;width:769px;height:16px;background-color:#c0c0c0;background-image:repeating-conic-gradient(#c0c0c0 0 25%,#fff 0 50%);background-size:2px 2px"></div>
<div style="left:46px;top:668px;width:16px;height:16px;background:#c0c0c0"></div>
<div style="left:46px;top:668px;width:16px;height:1px;background:#fff"></div>
<div style="left:46px;top:668px;width:1px;height:16px;background:#fff"></div>
<div style="left:46px;top:683px;width:16px;height:1px;background:#000"></div>
<div style="left:61px;top:668px;width:1px;height:16px;background:#000"></div>
<div style="left:47px;top:682px;width:14px;height:1px;background:#808080"></div>
<div style="left:60px;top:669px;width:1px;height:14px;background:#808080"></div>
<div style="left:47px;top:669px;width:14px;height:1px;background:#dfdfdf"></div>
<div style="left:47px;top:669px;width:1px;height:14px;background:#dfdfdf"></div>
<svg style="position:absolute;left:51px;top:672px" width="4" height="8" viewBox="0 0 4 8" shape-rendering="crispEdges"><path d="M4 0V8L0 4Z" fill="#000" shape-rendering="auto"/></svg>
<div style="left:327px;top:668px;width:205px;height:16px;background:#c0c0c0"></div>
<div style="left:327px;top:668px;width:205px;height:1px;background:#fff"></div>
<div style="left:327px;top:668px;width:1px;height:16px;background:#fff"></div>
<div style="left:327px;top:683px;width:205px;height:1px;background:#000"></div>
<div style="left:531px;top:668px;width:1px;height:16px;background:#000"></div>
<div style="left:328px;top:682px;width:203px;height:1px;background:#808080"></div>
<div style="left:530px;top:669px;width:1px;height:14px;background:#808080"></div>
<div style="left:328px;top:669px;width:203px;height:1px;background:#dfdfdf"></div>
<div style="left:328px;top:669px;width:1px;height:14px;background:#dfdfdf"></div>
<div style="left:799px;top:668px;width:16px;height:16px;background:#c0c0c0"></div>
<div style="left:799px;top:668px;width:16px;height:1px;background:#fff"></div>
<div style="left:799px;top:668px;width:1px;height:16px;background:#fff"></div>
<div style="left:799px;top:683px;width:16px;height:1px;background:#000"></div>
<div style="left:814px;top:668px;width:1px;height:16px;background:#000"></div>
<div style="left:800px;top:682px;width:14px;height:1px;background:#808080"></div>
<div style="left:813px;top:669px;width:1px;height:14px;background:#808080"></div>
<div style="left:800px;top:669px;width:14px;height:1px;background:#dfdfdf"></div>
<div style="left:800px;top:669px;width:1px;height:14px;background:#dfdfdf"></div>
<svg style="position:absolute;left:805px;top:672px" width="4" height="8" viewBox="0 0 4 8" shape-rendering="crispEdges"><path d="M0 0V8L4 4Z" fill="#000" shape-rendering="auto"/></svg>
<div style="left:12px;top:689px;width:90px;height:18px;background:#c0c0c0"></div>
<div style="left:12px;top:689px;width:90px;height:1px;background:#808080"></div>
<div style="left:12px;top:689px;width:1px;height:18px;background:#808080"></div>
<div style="left:12px;top:706px;width:90px;height:1px;background:#fff"></div>
<div style="left:101px;top:689px;width:1px;height:18px;background:#fff"></div>
<div class="st" style="left:14px;top:692px;white-space:pre">Plot vs. Time</div>
<div style="left:104px;top:689px;width:67px;height:18px;background:#c0c0c0"></div>
<div style="left:104px;top:689px;width:67px;height:1px;background:#808080"></div>
<div style="left:104px;top:689px;width:1px;height:18px;background:#808080"></div>
<div style="left:104px;top:706px;width:67px;height:1px;background:#fff"></div>
<div style="left:170px;top:689px;width:1px;height:18px;background:#fff"></div>
<div class="st" style="left:106px;top:692px;white-space:pre">Real Values</div>
<div style="left:173px;top:689px;width:59px;height:18px;background:#c0c0c0"></div>
<div style="left:173px;top:689px;width:59px;height:1px;background:#808080"></div>
<div style="left:173px;top:689px;width:1px;height:18px;background:#808080"></div>
<div style="left:173px;top:706px;width:59px;height:1px;background:#fff"></div>
<div style="left:231px;top:689px;width:1px;height:18px;background:#fff"></div>
<div class="st" style="left:175px;top:692px;white-space:pre">Standard</div>
<div style="left:233px;top:689px;width:98px;height:18px;background:#c0c0c0"></div>
<div style="left:233px;top:689px;width:98px;height:1px;background:#808080"></div>
<div style="left:233px;top:689px;width:1px;height:18px;background:#808080"></div>
<div style="left:233px;top:706px;width:98px;height:1px;background:#fff"></div>
<div style="left:330px;top:689px;width:1px;height:18px;background:#fff"></div>
<div class="st" style="left:235px;top:692px;white-space:pre">Show Plotted</div>
<div style="left:333px;top:689px;width:60px;height:18px;background:#c0c0c0"></div>
<div style="left:333px;top:689px;width:60px;height:1px;background:#808080"></div>
<div style="left:333px;top:689px;width:1px;height:18px;background:#808080"></div>
<div style="left:333px;top:706px;width:60px;height:1px;background:#fff"></div>
<div style="left:392px;top:689px;width:1px;height:18px;background:#fff"></div>
<div style="left:394px;top:689px;width:68px;height:18px;background:#c0c0c0"></div>
<div style="left:394px;top:689px;width:68px;height:1px;background:#808080"></div>
<div style="left:394px;top:689px;width:1px;height:18px;background:#808080"></div>
<div style="left:394px;top:706px;width:68px;height:1px;background:#fff"></div>
<div style="left:461px;top:689px;width:1px;height:18px;background:#fff"></div>
<div style="left:463px;top:689px;width:546px;height:18px;background:#c0c0c0"></div>
<div style="left:463px;top:689px;width:546px;height:1px;background:#808080"></div>
<div style="left:463px;top:689px;width:1px;height:18px;background:#808080"></div>
<div style="left:463px;top:706px;width:546px;height:1px;background:#fff"></div>
<div style="left:1008px;top:689px;width:1px;height:18px;background:#fff"></div>
<div style="left:335px;top:692px;width:10px;height:12px;background:#ff0000;box-sizing:border-box;border:1px solid #000"></div>
<div style="left:335px;top:692px;width:10px;height:12px;text-align:center;font-weight:bold;font-size:10px;line-height:12px;color:#000">P</div>
<div style="left:346px;top:692px;width:10px;height:12px;background:#fff;box-sizing:border-box;border:1px solid #0000c0"></div>
<div style="left:346px;top:692px;width:10px;height:12px;text-align:center;font-weight:bold;font-size:10px;line-height:12px;color:#0000c0">H</div>
<div style="left:357px;top:692px;width:10px;height:12px;background:#22dd22;box-sizing:border-box;border:1px solid #000"></div>
<div style="left:357px;top:692px;width:10px;height:12px;text-align:center;font-weight:bold;font-size:10px;line-height:12px;color:#000">R</div>
<div style="left:368px;top:692px;width:10px;height:12px;background:#ff00ff;box-sizing:border-box;border:1px solid #000"></div>
<div style="left:368px;top:692px;width:10px;height:12px;text-align:center;font-weight:bold;font-size:10px;line-height:12px;color:#000">C</div>
<div style="left:379px;top:692px;width:10px;height:12px;background:#00ffff;box-sizing:border-box;border:1px solid #000"></div>
<div style="left:379px;top:692px;width:10px;height:12px;text-align:center;font-weight:bold;font-size:10px;line-height:12px;color:#000">L</div>
<svg style="position:absolute;left:996px;top:694px" width="12" height="12" viewBox="0 0 12 12" shape-rendering="crispEdges"><rect x="0" y="11" width="1" height="1" fill="#fff"/><rect x="1" y="10" width="1" height="1" fill="#fff"/><rect x="2" y="9" width="1" height="1" fill="#fff"/><rect x="3" y="8" width="1" height="1" fill="#fff"/><rect x="4" y="7" width="1" height="1" fill="#fff"/><rect x="5" y="6" width="1" height="1" fill="#fff"/><rect x="6" y="5" width="1" height="1" fill="#fff"/><rect x="7" y="4" width="1" height="1" fill="#fff"/><rect x="8" y="3" width="1" height="1" fill="#fff"/><rect x="9" y="2" width="1" height="1" fill="#fff"/><rect x="10" y="1" width="1" height="1" fill="#fff"/><rect x="11" y="0" width="1" height="1" fill="#fff"/><rect x="1" y="11" width="1" height="1" fill="#808080"/><rect x="2" y="10" width="1" height="1" fill="#808080"/><rect x="3" y="9" width="1" height="1" fill="#808080"/><rect x="4" y="8" width="1" height="1" fill="#808080"/><rect x="5" y="7" width="1" height="1" fill="#808080"/><rect x="6" y="6" width="1" height="1" fill="#808080"/><rect x="7" y="5" width="1" height="1" fill="#808080"/><rect x="8" y="4" width="1" height="1" fill="#808080"/><rect x="9" y="3" width="1" height="1" fill="#808080"/><rect x="10" y="2" width="1" height="1" fill="#808080"/><rect x="11" y="1" width="1" height="1" fill="#808080"/><rect x="2" y="11" width="1" height="1" fill="#808080"/><rect x="3" y="10" width="1" height="1" fill="#808080"/><rect x="4" y="9" width="1" height="1" fill="#808080"/><rect x="5" y="8" width="1" height="1" fill="#808080"/><rect x="6" y="7" width="1" height="1" fill="#808080"/><rect x="7" y="6" width="1" height="1" fill="#808080"/><rect x="8" y="5" width="1" height="1" fill="#808080"/><rect x="9" y="4" width="1" height="1" fill="#808080"/><rect x="10" y="3" width="1" height="1" fill="#808080"/><rect x="11" y="2" width="1" height="1" fill="#808080"/><rect x="4" y="11" width="1" height="1" fill="#fff"/><rect x="5" y="10" width="1" height="1" fill="#fff"/><rect x="6" y="9" width="1" height="1" fill="#fff"/><rect x="7" y="8" width="1" height="1" fill="#fff"/><rect x="8" y="7" width="1" height="1" fill="#fff"/><rect x="9" y="6" width="1" height="1" fill="#fff"/><rect x="10" y="5" width="1" height="1" fill="#fff"/><rect x="11" y="4" width="1" height="1" fill="#fff"/><rect x="5" y="11" width="1" height="1" fill="#808080"/><rect x="6" y="10" width="1" height="1" fill="#808080"/><rect x="7" y="9" width="1" height="1" fill="#808080"/><rect x="8" y="8" width="1" height="1" fill="#808080"/><rect x="9" y="7" width="1" height="1" fill="#808080"/><rect x="10" y="6" width="1" height="1" fill="#808080"/><rect x="11" y="5" width="1" height="1" fill="#808080"/><rect x="6" y="11" width="1" height="1" fill="#808080"/><rect x="7" y="10" width="1" height="1" fill="#808080"/><rect x="8" y="9" width="1" height="1" fill="#808080"/><rect x="9" y="8" width="1" height="1" fill="#808080"/><rect x="10" y="7" width="1" height="1" fill="#808080"/><rect x="11" y="6" width="1" height="1" fill="#808080"/><rect x="8" y="11" width="1" height="1" fill="#fff"/><rect x="9" y="10" width="1" height="1" fill="#fff"/><rect x="10" y="9" width="1" height="1" fill="#fff"/><rect x="11" y="8" width="1" height="1" fill="#fff"/><rect x="9" y="11" width="1" height="1" fill="#808080"/><rect x="10" y="10" width="1" height="1" fill="#808080"/><rect x="11" y="9" width="1" height="1" fill="#808080"/><rect x="10" y="11" width="1" height="1" fill="#808080"/><rect x="11" y="10" width="1" height="1" fill="#808080"/></svg>
<div style="left:0px;top:723px;width:170px;height:16px;background:#c0c0c0"></div>
<div style="left:0px;top:723px;width:170px;height:1px;background:#808080"></div>
<div style="left:0px;top:723px;width:1px;height:16px;background:#808080"></div>
<div style="left:0px;top:738px;width:170px;height:1px;background:#fff"></div>
<div style="left:169px;top:723px;width:1px;height:16px;background:#fff"></div>
<div style="left:172px;top:723px;width:138px;height:16px;background:#c0c0c0"></div>
<div style="left:172px;top:723px;width:138px;height:1px;background:#808080"></div>
<div style="left:172px;top:723px;width:1px;height:16px;background:#808080"></div>
<div style="left:172px;top:738px;width:138px;height:1px;background:#fff"></div>
<div style="left:309px;top:723px;width:1px;height:16px;background:#fff"></div>
<div class="st" style="left:174px;top:725px;white-space:pre">Setup - Ex run3.stu</div>
<div style="left:311px;top:723px;width:139px;height:16px;background:#c0c0c0"></div>
<div style="left:311px;top:723px;width:139px;height:1px;background:#808080"></div>
<div style="left:311px;top:723px;width:1px;height:16px;background:#808080"></div>
<div style="left:311px;top:738px;width:139px;height:1px;background:#fff"></div>
<div style="left:449px;top:723px;width:1px;height:16px;background:#fff"></div>
<div class="st" style="left:313px;top:725px;white-space:pre">No Maths</div>
<div style="left:451px;top:723px;width:569px;height:16px;background:#c0c0c0"></div>
<div style="left:451px;top:723px;width:569px;height:1px;background:#808080"></div>
<div style="left:451px;top:723px;width:1px;height:16px;background:#808080"></div>
<div style="left:451px;top:738px;width:569px;height:1px;background:#fff"></div>
<div style="left:1019px;top:723px;width:1px;height:16px;background:#fff"></div>
<div class="st" style="left:453px;top:725px;white-space:pre">No Alarms</div>
<div style="left:0px;top:740px;width:1024px;height:28px;background:#c0c0c0"></div>
<div style="left:0px;top:740px;width:1024px;height:1px;background:#dfdfdf"></div>
<div style="left:0px;top:741px;width:1024px;height:1px;background:#fff"></div>
<div style="left:2px;top:744px;width:54px;height:22px;background:#c0c0c0"></div>
<div style="left:2px;top:744px;width:54px;height:1px;background:#dfdfdf"></div>
<div style="left:2px;top:744px;width:1px;height:22px;background:#dfdfdf"></div>
<div style="left:2px;top:765px;width:54px;height:1px;background:#000"></div>
<div style="left:55px;top:744px;width:1px;height:22px;background:#000"></div>
<div style="left:3px;top:745px;width:52px;height:1px;background:#fff"></div>
<div style="left:3px;top:745px;width:1px;height:20px;background:#fff"></div>
<div style="left:3px;top:764px;width:52px;height:1px;background:#808080"></div>
<div style="left:54px;top:745px;width:1px;height:20px;background:#808080"></div>
<svg style="position:absolute;left:5px;top:747px" width="18" height="16" viewBox="0 0 18 16" shape-rendering="crispEdges"><rect x="0" y="3" width="1" height="1" fill="#000"/><rect x="0" y="6" width="1" height="1" fill="#000"/><rect x="0" y="9" width="1" height="1" fill="#000"/><rect x="0" y="12" width="1" height="1" fill="#000"/><rect x="2" y="4" width="4" height="3" fill="#ff4040"/><rect x="2" y="9" width="4" height="3" fill="#4040ff"/><path d="M6 3L11 1V7L6 8Z" fill="#ff0000" stroke="#000" stroke-width="0.6" shape-rendering="auto"/><path d="M11 1L16 0V6L11 7Z" fill="#00c000" stroke="#000" stroke-width="0.6" shape-rendering="auto"/><path d="M6 8L11 7V13L6 14Z" fill="#0000ff" stroke="#000" stroke-width="0.6" shape-rendering="auto"/><path d="M11 7L16 6V12L11 13Z" fill="#ffff00" stroke="#000" stroke-width="0.6" shape-rendering="auto"/></svg>
<div style="left:25px;top:747px;white-space:pre;font-weight:bold;font-size:12px;line-height:16px;color:#000">Start</div>
<div style="left:62px;top:744px;width:1px;height:22px;background:#fff"></div>
<div style="left:63px;top:744px;width:1px;height:22px;background:#808080"></div>
<div style="left:166px;top:744px;width:1px;height:22px;background:#fff"></div>
<div style="left:167px;top:744px;width:1px;height:22px;background:#808080"></div>
<div style="left:169px;top:744px;width:1px;height:22px;background:#fff"></div>
<div style="left:170px;top:744px;width:1px;height:22px;background:#808080"></div>
<svg style="position:absolute;left:72px;top:746px" width="17" height="17" viewBox="0 0 17 17" shape-rendering="crispEdges"><rect x="0.5" y="2.5" width="15" height="14" fill="#208890"/><path d="M15.5 2.5V16.5H0.5" fill="none" stroke="#000"/><path d="M1 10L6 15H13L15 13V6L10 3Z" fill="#f0e8d0" opacity="0.9"/><path d="M3 9.5L7 13L12 8" stroke="#000" stroke-width="1.2" fill="none" shape-rendering="auto"/><path d="M7 12L14 2" stroke="#e0a020" stroke-width="2" shape-rendering="auto"/><path d="M8 11.5L14.5 2.5" stroke="#302000" stroke-width="0.8" shape-rendering="auto"/></svg>
<svg style="position:absolute;left:95px;top:747px" width="16" height="17" viewBox="0 0 16 17" shape-rendering="crispEdges"><path d="M8 2A6.3 6.3 0 1 0 14 10H5.2A3 3 0 0 1 11 7.6H14.2A6.3 6.3 0 0 0 8 2Z" fill="#2a7fe0" shape-rendering="auto"/><path d="M5.3 7.6A3 3 0 0 1 10.8 7.6Z" fill="#a8d0f8" shape-rendering="auto"/><path d="M2 14C0 12 3 6 9 3C13 1 16 2 14 5" stroke="#1860c0" stroke-width="1.3" fill="none" shape-rendering="auto"/></svg>
<svg style="position:absolute;left:118px;top:746px" width="17" height="18" viewBox="0 0 17 18" shape-rendering="crispEdges"><rect x="0.5" y="4.5" width="15" height="9" fill="#fffbe0" stroke="#000"/><rect x="12" y="6" width="2" height="2" fill="#c00000"/><path d="M9 2C6 1 3 2 2 5" stroke="#3060e0" stroke-width="1.6" fill="none" shape-rendering="auto"/><path d="M1 3L2.5 7L5 4Z" fill="#0000a0" shape-rendering="auto"/><path d="M7 16C10 17 13 16 14 13" stroke="#3060e0" stroke-width="1.6" fill="none" shape-rendering="auto"/><path d="M15 15L13.5 11L11 14Z" fill="#0000a0" shape-rendering="auto"/></svg>
<svg style="position:absolute;left:141px;top:747px" width="17" height="16" viewBox="0 0 17 16" shape-rendering="crispEdges"><rect x="3.5" y="1.5" width="13" height="12" fill="#e0f4ff" stroke="#404040"/><rect x="4" y="2" width="12" height="2" fill="#5080e0"/><rect x="3" y="1" width="3" height="3" fill="#0000c0"/><path d="M6 6Q10 12 15 6" stroke="#80c0f0" fill="none" shape-rendering="auto"/><path d="M1 15L5 9" stroke="#c08040" stroke-width="1.6" shape-rendering="auto"/></svg>
<div style="left:176px;top:744px;width:160px;height:22px;background-color:#c0c0c0;background-image:repeating-conic-gradient(#c0c0c0 0 25%,#fff 0 50%);background-size:2px 2px"></div>
<div style="left:176px;top:744px;width:160px;height:1px;background:#000"></div>
<div style="left:176px;top:744px;width:1px;height:22px;background:#000"></div>
<div style="left:177px;top:745px;width:158px;height:1px;background:#808080"></div>
<div style="left:177px;top:745px;width:1px;height:20px;background:#808080"></div>
<div style="left:176px;top:765px;width:160px;height:1px;background:#fff"></div>
<div style="left:335px;top:744px;width:1px;height:22px;background:#fff"></div>
<svg style="position:absolute;left:179px;top:747px" width="16" height="16" viewBox="0 0 16 16" shape-rendering="crispEdges"><path d="M0.5 0.5H11.5L15.5 4.5V15.5H0.5Z" fill="#fff" stroke="#e8e0f8"/><path d="M1 12L12 3" stroke="#303090" stroke-width="1.3" shape-rendering="auto" fill="none"/><path d="M1 4C5 5 8 7 15 11" stroke="#c06060" stroke-width="1" shape-rendering="auto" fill="none"/><rect x="6" y="12" width="10" height="4" fill="#f0a020"/><rect x="7" y="13" width="8" height="2" fill="#ffe040"/></svg>
<div style="left:198px;top:747px;white-space:pre;font-weight:bold;font-size:12px;line-height:16px;color:#000">AEMLog</div>
<div style="left:887px;top:744px;width:134px;height:22px;background:#c0c0c0"></div>
<div style="left:887px;top:744px;width:134px;height:1px;background:#808080"></div>
<div style="left:887px;top:744px;width:1px;height:22px;background:#808080"></div>
<div style="left:887px;top:765px;width:134px;height:1px;background:#fff"></div>
<div style="left:1020px;top:744px;width:1px;height:22px;background:#fff"></div>
<svg style="position:absolute;left:893px;top:747px" width="17" height="16" viewBox="0 0 17 16" shape-rendering="crispEdges"><path d="M1.5 15.5V1.5H15.5" fill="none" stroke="#000"/><rect x="2" y="2" width="13" height="13" fill="#fff"/><rect x="2" y="2" width="13" height="2" fill="#ffffff"/><path d="M9 3h1M11 3h1M13 3h1" stroke="#000"/><path d="M2 2h5v5h-5z" fill="#fff"/><path d="M2.5 2.5h2v4h-2M5.5 2.5h2v4h-2v-4" fill="none" stroke="#000080"/><circle cx="11.5" cy="11" r="3.7" fill="#fff" stroke="#b00010" stroke-width="1.8" shape-rendering="auto"/><path d="M11.5 9V11H13" stroke="#000" fill="none"/></svg>
<svg style="position:absolute;left:910px;top:747px" width="17" height="16" viewBox="0 0 17 16" shape-rendering="crispEdges"><path d="M2 0.5C1.5 4 2 8 6 9" stroke="#000" stroke-width="1.2" fill="none" shape-rendering="auto"/><path d="M3 8L9 9.5L11 13L6 13.5Z" fill="#e8e8e8" stroke="#404040" stroke-width="0.9" shape-rendering="auto"/><path d="M10 11L14 9L16 12L12 14Z" fill="#c8e060" stroke="#404000" stroke-width="0.7" shape-rendering="auto"/></svg>
<svg style="position:absolute;left:926px;top:746px" width="12" height="17" viewBox="0 0 12 17" shape-rendering="crispEdges"><path d="M0.8 8L8 1.5V15.5Z" fill="#f0f080" stroke="#000" stroke-width="1" shape-rendering="auto"/><rect x="8" y="1" width="3" height="15" fill="#fff"/><path d="M8.5 1V16M11.5 1V16" stroke="#000"/><rect x="9" y="7" width="2" height="2" fill="#000"/></svg>
<div style="left:940px;top:755px;width:3px;height:1px;background:#a0a0a0"></div>
<svg style="position:absolute;left:945px;top:748px" width="17" height="15" viewBox="0 0 17 15" shape-rendering="crispEdges"><rect x="4.5" y="0.5" width="11" height="12" fill="#fff" stroke="#000"/><rect x="5" y="1" width="10" height="2" fill="#0000c0"/><path d="M10 6h4M10 8h4M10 10h4" stroke="#808080"/><rect x="0.5" y="7.5" width="7" height="6" fill="#d0d0d0" stroke="#000"/><path d="M2 7.5V5.5A2 2 0 0 1 6 5.5V7.5" stroke="#000" stroke-width="1.2" fill="none" shape-rendering="auto"/></svg>
<div style="left:971px;top:748px;white-space:pre;font-size:11px;line-height:14px;color:#000;letter-spacing:0.25px">2:52 PM</div>
</body></html>
